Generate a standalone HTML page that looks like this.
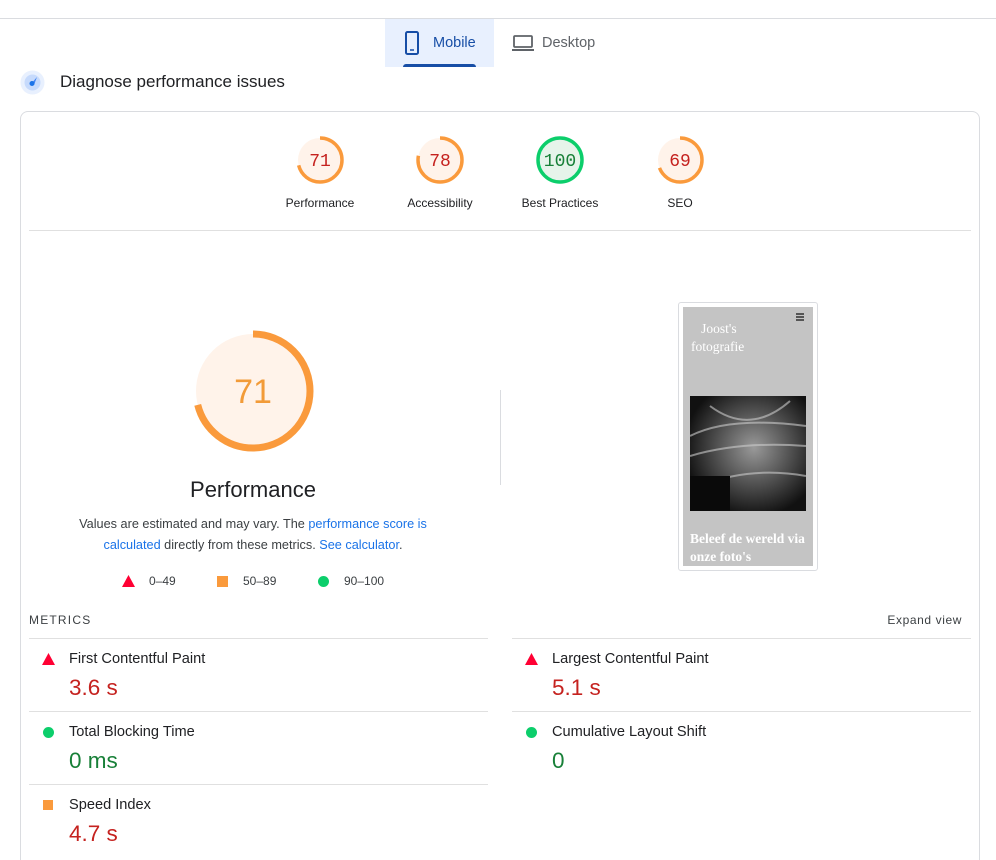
<!DOCTYPE html>
<html><head><meta charset="utf-8"><style>
*{margin:0;padding:0;box-sizing:border-box}
html,body{width:996px;height:860px;overflow:hidden}
body{background:#fff;font-family:"Liberation Sans",Arial,sans-serif;color:#202124;position:relative}
.a{position:absolute;white-space:nowrap}
.lbl{font-size:12px;color:#202124;transform:translateX(-50%)}
.hr{position:absolute;height:1px;background:#e0e0e0}
.mt{font-size:14.6px;color:#202124}
.mv{font-size:22.5px}
.red{color:#c5221f}.grn{color:#188038}
</style></head><body>
<div class="hr" style="left:0;top:18px;width:996px;background:#dadce0"></div>
<div class="a" style="left:385px;top:19px;width:109px;height:48px;background:#e8f0fe"></div>
<div class="a" style="left:403px;top:64px;width:73px;height:3px;background:#174ea6;border-radius:3px 3px 0 0"></div>
<svg class="a" style="left:404px;top:31px" width="16" height="24" viewBox="0 0 16 24"><rect x="2" y="1" width="12" height="22" rx="1.5" fill="none" stroke="#174ea6" stroke-width="2"/><line x1="6" y1="19" x2="10" y2="19" stroke="#174ea6" stroke-width="1.5"/></svg>
<div class="a" style="left:433px;top:35px;font-size:14.5px;color:#174ea6">Mobile</div>
<svg class="a" style="left:511px;top:34px" width="24" height="18" viewBox="0 0 24 18"><rect x="3" y="2" width="18" height="11" rx="1" fill="none" stroke="#5f6368" stroke-width="1.8"/><rect x="1" y="15" width="22" height="2" fill="#5f6368"/></svg>
<div class="a" style="left:542px;top:35px;font-size:14.5px;color:#5f6368">Desktop</div>
<svg class="a" style="left:20px;top:70px" width="25" height="25" viewBox="0 0 25 25"><circle cx="12.5" cy="12.5" r="12" fill="#e8f0fe"/><circle cx="12.5" cy="12.5" r="8" fill="#c6dafc"/><path d="M11 14 L17 7 L14 15 Z" fill="#4285f4"/><circle cx="12" cy="13.5" r="2.5" fill="#1a73e8"/></svg>
<div class="a" style="left:60px;top:72px;font-size:17px;color:#202124">Diagnose performance issues</div>
<div class="a" style="left:20px;top:111px;width:960px;height:749px;border:1px solid #dadce0;border-bottom:none;border-radius:8px 8px 0 0"></div>

<svg class="a" style="left:0;top:0" width="996" height="460">
<circle cx="320" cy="160" r="22" fill="#fff3ea"/><circle cx="320" cy="160" r="22" fill="none" stroke="#fa9a3c" stroke-width="3.5" stroke-dasharray="98.1 200" transform="rotate(-90 320 160)"/>
<circle cx="440" cy="160" r="22" fill="#fff3ea"/><circle cx="440" cy="160" r="22" fill="none" stroke="#fa9a3c" stroke-width="3.5" stroke-dasharray="107.8 200" transform="rotate(-90 440 160)"/>
<circle cx="560" cy="160" r="22" fill="#e6f4ea"/><circle cx="560" cy="160" r="22" fill="none" stroke="#0cce6b" stroke-width="3.5"/>
<circle cx="680" cy="160" r="22" fill="#fff3ea"/><circle cx="680" cy="160" r="22" fill="none" stroke="#fa9a3c" stroke-width="3.5" stroke-dasharray="95.4 200" transform="rotate(-90 680 160)"/>
<circle cx="253" cy="391" r="57" fill="#fff3ea"/><circle cx="253" cy="391" r="57" fill="none" stroke="#fa9a3c" stroke-width="7" stroke-dasharray="254.3 400" transform="rotate(-90 253 391)"/>
<g font-family="Liberation Mono,monospace" font-size="18" text-anchor="middle">
<text x="320" y="166" fill="#c5221f">71</text><text x="440" y="166" fill="#c5221f">78</text><text x="560" y="166" fill="#188038">100</text><text x="680" y="166" fill="#c5221f">69</text>
</g>
<text x="253" y="403" font-family="Liberation Sans,sans-serif" font-size="34" text-anchor="middle" fill="#f29b38">71</text>
</svg>
<div class="a lbl" style="left:320px;top:196px">Performance</div>
<div class="a lbl" style="left:440px;top:196px">Accessibility</div>
<div class="a lbl" style="left:560px;top:196px">Best Practices</div>
<div class="a lbl" style="left:680px;top:196px">SEO</div>
<div class="hr" style="left:29px;top:230px;width:942px"></div>

<div class="a" style="left:253px;top:477px;font-size:22px;transform:translateX(-50%)">Performance</div>
<div class="a" style="left:253px;top:514px;font-size:12.7px;color:#3c4043;transform:translateX(-50%);text-align:center;line-height:21px">Values are estimated and may vary. The <span style="color:#1a73e8">performance score is</span><br><span style="color:#1a73e8">calculated</span> directly from these metrics. <span style="color:#1a73e8">See calculator</span>.</div>
<svg class="a" style="left:122px;top:575px" width="13" height="12"><path d="M6.5 0 L13 12 L0 12Z" fill="#ff0033"/></svg>
<div class="a" style="left:149px;top:574px;font-size:12px;color:#3c4043">0–49</div>
<div class="a" style="left:217px;top:576px;width:11px;height:11px;background:#fa9a3c"></div>
<div class="a" style="left:243px;top:574px;font-size:12px;color:#3c4043">50–89</div>
<div class="a" style="left:318px;top:576px;width:11px;height:11px;border-radius:50%;background:#0cce6b"></div>
<div class="a" style="left:344px;top:574px;font-size:12px;color:#3c4043">90–100</div>

<div class="a" style="left:500px;top:390px;width:1px;height:95px;background:#dadce0"></div>
<div class="a" style="left:678px;top:302px;width:140px;height:269px;border:1px solid #dadce0;border-radius:3px;background:#fff"></div>
<div class="a" style="left:683px;top:307px;width:130px;height:259px;background:#c4c4c4"></div>
<div class="a" style="left:796px;top:313px;width:8px;height:1.5px;background:#555"></div>
<div class="a" style="left:796px;top:316px;width:8px;height:1.5px;background:#555"></div>
<div class="a" style="left:796px;top:319px;width:8px;height:1.5px;background:#555"></div>
<div class="a" style="left:691px;top:320px;font-family:'Liberation Serif',serif;font-size:13.5px;color:#fff;line-height:18px">&nbsp;&nbsp;&nbsp;Joost's<br>fotografie</div>
<svg class="a" style="left:690px;top:396px" width="116" height="115"><defs><radialGradient id="g" cx="55%" cy="45%" r="60%"><stop offset="0" stop-color="#999"/><stop offset=".5" stop-color="#555"/><stop offset="1" stop-color="#111"/></radialGradient></defs><rect width="116" height="115" fill="url(#g)"/><path d="M0 40 Q40 20 116 30 M0 60 Q50 45 116 50 M10 90 Q60 70 116 80 M20 10 Q60 40 100 5" stroke="#ccc" stroke-width="2" fill="none" opacity=".6"/><rect x="0" y="80" width="40" height="35" fill="#0a0a0a"/></svg>
<div class="a" style="left:690px;top:530px;font-family:'Liberation Serif',serif;font-size:13.5px;font-weight:bold;color:#fff;line-height:18px">Beleef de wereld via<br>onze foto's</div>

<div class="a" style="left:29px;top:613px;font-size:12px;letter-spacing:1.2px;color:#3c4043">METRICS</div>
<div class="a" style="right:34px;top:613px;font-size:12px;letter-spacing:.6px;color:#3c4043">Expand view</div>
<div class="hr" style="left:29px;top:638px;width:459px"></div><div class="hr" style="left:512px;top:638px;width:459px"></div>
<div class="hr" style="left:29px;top:711px;width:459px"></div><div class="hr" style="left:512px;top:711px;width:459px"></div>
<div class="hr" style="left:29px;top:784px;width:459px"></div>

<svg class="a" style="left:42px;top:653px" width="13" height="12"><path d="M6.5 0 L13 12 L0 12Z" fill="#ff0033"/></svg>
<div class="a mt" style="left:69px;top:651px">First Contentful Paint</div>
<div class="a mv red" style="left:69px;top:675px">3.6 s</div>
<svg class="a" style="left:525px;top:653px" width="13" height="12"><path d="M6.5 0 L13 12 L0 12Z" fill="#ff0033"/></svg>
<div class="a mt" style="left:552px;top:651px">Largest Contentful Paint</div>
<div class="a mv red" style="left:552px;top:675px">5.1 s</div>

<div class="a" style="left:43px;top:727px;width:11px;height:11px;border-radius:50%;background:#0cce6b"></div>
<div class="a mt" style="left:69px;top:724px">Total Blocking Time</div>
<div class="a mv grn" style="left:69px;top:748px">0 ms</div>
<div class="a" style="left:526px;top:727px;width:11px;height:11px;border-radius:50%;background:#0cce6b"></div>
<div class="a mt" style="left:552px;top:724px">Cumulative Layout Shift</div>
<div class="a mv grn" style="left:552px;top:748px">0</div>

<div class="a" style="left:43px;top:800px;width:10px;height:10px;background:#fa9a3c"></div>
<div class="a mt" style="left:69px;top:797px">Speed Index</div>
<div class="a mv red" style="left:69px;top:821px">4.7 s</div>
</body></html>
